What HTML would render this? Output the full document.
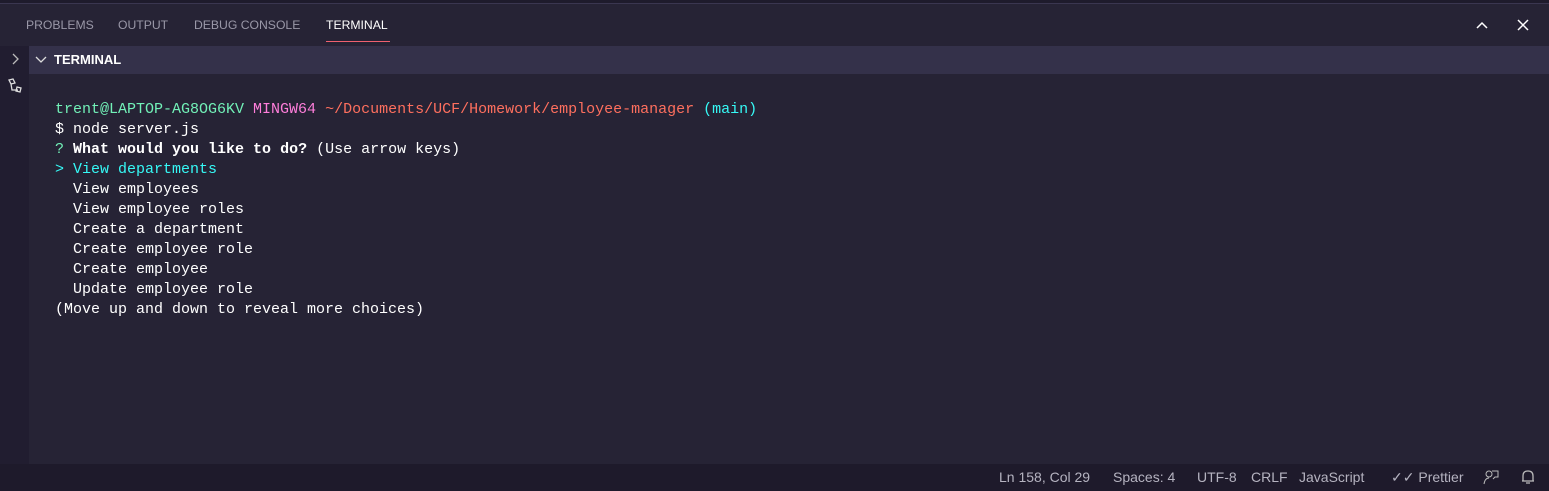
<!DOCTYPE html>
<html><head><style>
body{margin:0;width:1549px;height:491px;overflow:hidden;background:#262335;font-family:"Liberation Sans",sans-serif;position:relative}
.abs{position:absolute}
.tab{position:absolute;top:18px;font-size:12.2px;color:#9a98a8}
.term{position:absolute;left:55px;top:100px;font-family:"Liberation Mono",monospace;font-size:15px;line-height:20px;color:#fff;white-space:pre}
.st{position:absolute;top:469px;font-size:14px;color:#b5b3c0}
</style></head><body>
<div class="abs" style="left:0;top:0;width:1549px;height:3px;background:#1e1b2c"></div>
<div class="abs" style="left:0;top:3px;width:1549px;height:1px;background:#3a3650"></div>
<div class="tab" style="left:26px">PROBLEMS</div>
<div class="tab" style="left:118px">OUTPUT</div>
<div class="tab" style="left:194px">DEBUG CONSOLE</div>
<div class="tab" style="left:326px;color:#fff">TERMINAL</div>
<div class="abs" style="left:326px;top:41px;width:64px;height:1px;background:#f0616f"></div>
<svg class="abs" style="left:1474px;top:17px" width="16" height="16"><path d="M3 11 L8 6 L13 11" stroke="#fff" stroke-width="1.5" fill="none"/></svg>
<svg class="abs" style="left:1515px;top:17px" width="16" height="16"><path d="M3 3 L13 13 M13 3 L3 13" stroke="#fff" stroke-width="1.5" fill="none"/></svg>
<div class="abs" style="left:0;top:46px;width:29px;height:418px;background:#211d30"></div>
<div class="abs" style="left:29px;top:46px;width:1520px;height:28px;background:#34314a"></div>
<svg class="abs" style="left:8px;top:52px" width="14" height="14"><path d="M5 2 L10 7 L5 12" stroke="#bbb" stroke-width="1.3" fill="none"/></svg>
<svg class="abs" style="left:34px;top:53px" width="14" height="14"><path d="M2 4 L7 9 L12 4" stroke="#ddd" stroke-width="1.3" fill="none"/></svg>
<div class="abs" style="left:54px;top:52px;font-size:13px;font-weight:bold;color:#fff">TERMINAL</div>
<svg class="abs" style="left:6px;top:77px" width="18" height="18"><path d="M3 3 L7 2 L9 6 L5 7 Z M5 7 L6 13 L12 13 M11 10 L15 11 L14 15 L10 14 Z" stroke="#ddd" stroke-width="1.3" fill="none"/></svg>
<div class="term"><span style="color:#72f1b8">trent@LAPTOP-AG8OG6KV</span> <span style="color:#ff7edb">MINGW64</span> <span style="color:#fe6f5e">~/Documents/UCF/Homework/employee-manager</span> <span style="color:#36f9f6">(main)</span>
$ node server.js
<span style="color:#72f1b8">?</span> <b>What would you like to do?</b> (Use arrow keys)
<span style="color:#36f9f6">&gt; View departments</span>
  View employees
  View employee roles
  Create a department
  Create employee role
  Create employee
  Update employee role
(Move up and down to reveal more choices)</div>
<div class="abs" style="left:0;top:464px;width:1549px;height:27px;background:#1e1a2b"></div>
<div class="st" style="left:999px">Ln 158, Col 29</div>
<div class="st" style="left:1113px">Spaces: 4</div>
<div class="st" style="left:1197px">UTF-8</div>
<div class="st" style="left:1251px">CRLF</div>
<div class="st" style="left:1299px">JavaScript</div>
<div class="st" style="left:1391px">✓✓ Prettier</div>
<svg class="abs" style="left:1482px;top:468px" width="18" height="18"><circle cx="7" cy="6" r="3" stroke="#bbb" fill="none"/><path d="M2 16 Q3 10 7 10 M10 3 H16 V9 H13 L11 11" stroke="#bbb" fill="none"/></svg>
<svg class="abs" style="left:1519px;top:468px" width="18" height="18"><path d="M4 13 V8 Q4 3 9 3 Q14 3 14 8 V13 H4 M3 13 H15 M7 15 H11" stroke="#bbb" stroke-width="1.3" fill="none"/></svg>
</body></html>
